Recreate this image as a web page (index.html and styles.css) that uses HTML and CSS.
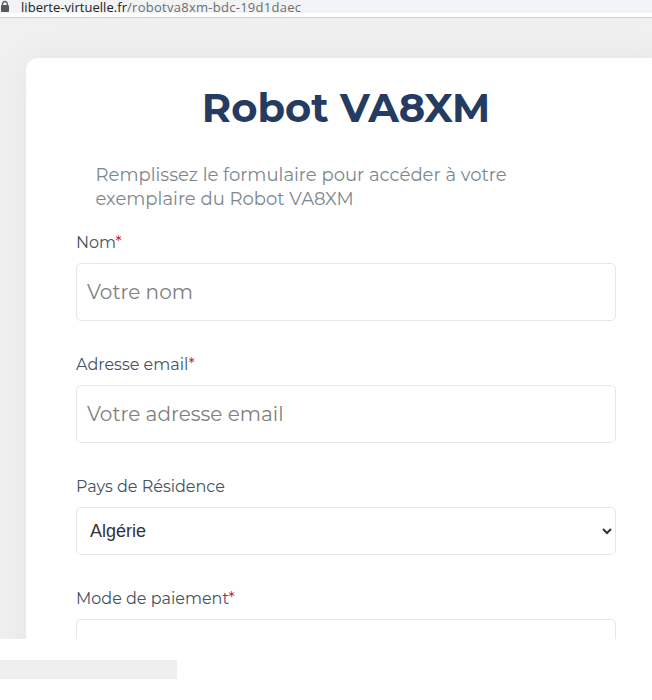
FILE: index.html
```
<!DOCTYPE html>
<html lang="fr">
<head>
    <meta charset="UTF-8">
    <title>Robot VA8XM</title>
    <link rel="stylesheet" href="styles.css">
</head>
<body>
    <div class="address-bar">
        <svg class="lock" width="10" height="13" viewBox="0 0 10 13">
            <path d="M2.5 6V3.9a2.4 2.4 0 0 1 4.8 0V6" fill="none" stroke="#55585c" stroke-width="1.3"/>
            <rect x="1" y="5" width="8" height="7" rx="1" fill="#55585c"/>
        </svg>
        <div class="url"><span class="host">liberte-virtuelle.fr</span><span class="path">/robotva8xm-bdc-19d1daec</span></div>
    </div>
    <main class="page">
        <form class="card">
            <h1>Robot VA8XM</h1>
            <p class="intro">Remplissez le formulaire pour accéder à votre<br>exemplaire du Robot VA8XM</p>
            <div class="field">
                <label for="nom">Nom<span class="required">*</span></label>
                <input id="nom" type="text" placeholder="Votre nom">
            </div>
            <div class="field">
                <label for="email">Adresse email<span class="required">*</span></label>
                <input id="email" type="email" placeholder="Votre adresse email">
            </div>
            <div class="field">
                <label for="pays">Pays de Résidence</label>
                <select id="pays">
                    <option>Algérie</option>
                </select>
            </div>
            <div class="field">
                <label for="paiement">Mode de paiement<span class="required">*</span></label>
                <input id="paiement" type="text">
            </div>
        </form>
    </main>
    <div class="status-bar"></div>
</body>
</html>
```
FILE: styles.css
```
* {
    box-sizing: border-box;
}
body {
    margin: 0;
    height: 700px;
    overflow: hidden;
    background: #fff;
    font-family: Montserrat, Inter, sans-serif;
}

/* Browser bar */
.address-bar {
    display: flex;
    height: 18px;
    background: linear-gradient(#f1f3f4 13px, #fff 13px);
    border-bottom: 1px solid #cfcfcf;
}
.lock {
    flex: none;
}
.url {
    margin-left: 11px;
    font: 13px/15px "Open Sans", sans-serif;
    white-space: nowrap;
}
.host {
    color: #222427;
    letter-spacing: 0.04px;
}
.path {
    color: #6b6e72;
    letter-spacing: 0.27px;
}

/* Form */
.page {
    height: 621px;
    padding: 40px 0 0 26px;
    overflow: hidden;
    background: #f0f0f0;
}
.card {
    width: 640px;
    height: 800px;
    padding: 26px 50px 0;
    border-radius: 12px;
    background: #fff;
    box-shadow: 0 0 40px rgba(0, 0, 0, 0.05);
}
h1 {
    margin: 0;
    font-size: 40px;
    line-height: 48px;
    font-weight: 700;
    text-align: center;
    color: #253b62;
}
.intro {
    margin: 31px 0 20px 19.5px;
    font-size: 18px;
    line-height: 24px;
    font-weight: 400;
    white-space: nowrap;
    color: #7d8790;
}
.field {
    display: flex;
    flex-direction: column;
    margin-bottom: 32px;
}
label {
    height: 32px;
    font-size: 16px;
    line-height: 24px;
    font-weight: 400;
    color: #45525f;
}
.required {
    color: #d02030;
}
input,
select {
    width: 540px;
    border: 1px solid #e6e6e6;
    border-radius: 5px;
    background: #fff;
    outline: none;
}
input {
    height: 58px;
    padding: 0 10px;
    font-family: inherit;
    font-size: 20px;
    font-weight: 400;
}
input::placeholder {
    color: #808080;
}
select {
    height: 48px;
    padding: 0 0 0 9px;
    font: 18px "Liberation Sans", Arial, sans-serif;
    color: #333;
}

.status-bar {
    width: 177px;
    height: 19px;
    margin-top: 21px;
    background: #efefef;
}
```
